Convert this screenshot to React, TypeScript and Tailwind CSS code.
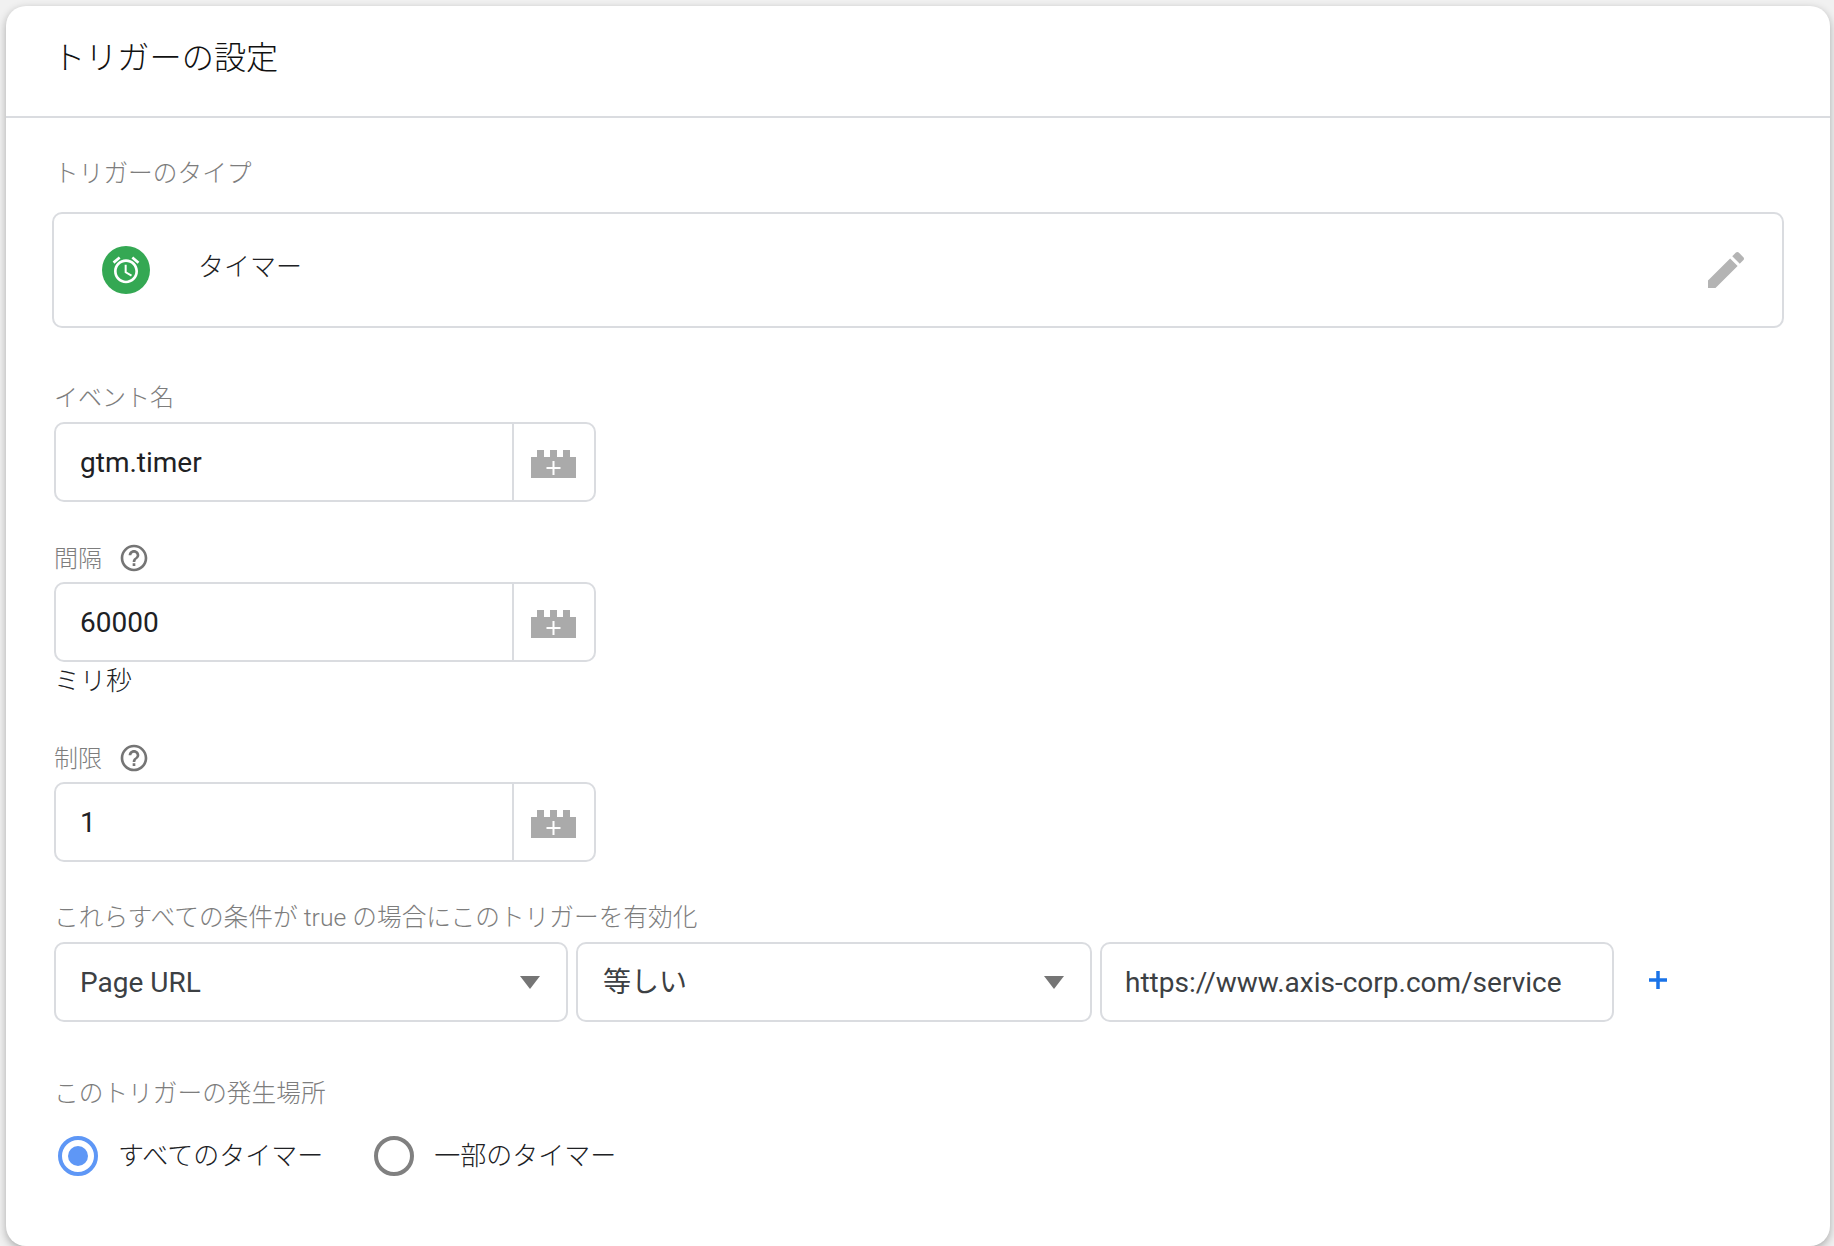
const font = { fontFamily: 'Roboto, "Noto Sans CJK JP", sans-serif' };

function BlockIcon() {
  return (
    <svg width="45" height="28" viewBox="0 0 45 28" className="block">
      <path
        fill="#aaaaaa"
        d="M0 7h6V0h7v7h6V0h7v7h6V0h7v7h6v21H0z"
      />
      <path fill="#ffffff" d="M21.5 11h2v6h6v2h-6v6h-2v-6h-6v-2h6z" />
    </svg>
  );
}

function HelpIcon() {
  return (
    <svg width="32" height="32" viewBox="0 0 24 24" fill="#757575" className="block">
      <path d="M11 18h2v-2h-2v2zm1-16C6.48 2 2 6.48 2 12s4.48 10 10 10 10-4.48 10-10S17.52 2 12 2zm0 18c-4.41 0-8-3.59-8-8s3.59-8 8-8 8 3.59 8 8-3.59 8-8 8zm0-14c-2.21 0-4 1.79-4 4h2c0-1.1.9-2 2-2s2 .9 2 2c0 2-3 1.75-3 5h2c0-2.25 3-2.5 3-5 0-2.21-1.79-4-4-4z" />
    </svg>
  );
}

function Label({ text, help, short, className }: { text: string; help?: boolean; short?: boolean; className?: string }) {
  return (
    <div className={`flex h-8 items-center font-light leading-8 text-[#7d7d7d] ${short ? 'text-[24px]' : 'text-[24.7px]'} ${className}`}>
      <span className={help ? 'pt-[1px]' : 'pt-[2px]'}>{text}</span>
      {help && (
        <span className="ml-4">
          <HelpIcon />
        </span>
      )}
    </div>
  );
}

function VarField({ value, className }: { value: string; className?: string }) {
  return (
    <div className={`flex h-20 w-[542px] rounded-[10px] border-2 border-[#dadce0] ${className}`}>
      <div className="flex flex-1 items-center pl-6 pt-[2px] text-[28px] text-[#202124]">{value}</div>
      <div className="flex w-[82px] items-center justify-center border-l-2 border-[#dadce0] pr-[1px] pt-[3px]">
        <BlockIcon />
      </div>
    </div>
  );
}

function SelectBox({ value, className }: { value: string; className?: string }) {
  return (
    <div className={`flex h-20 items-center justify-between rounded-[10px] border-2 border-[#dadce0] pl-6 pr-[26px] text-[28px] text-[#3c4043] ${className}`}>
      <span className="pt-[2px]">{value}</span>
      <span className="h-0 w-0 border-x-[10px] border-t-[13px] border-x-transparent border-t-[#757575]" />
    </div>
  );
}

function Radio({ text, checked }: { text: string; checked?: boolean }) {
  return (
    <div className="flex items-center gap-5">
      <div className={`flex h-10 w-10 items-center justify-center rounded-full border-[4px] ${checked ? 'border-[#5e97f6]' : 'border-[#808080]'}`}>
        {checked && <div className="h-5 w-5 rounded-full bg-[#5e97f6]" />}
      </div>
      <span className="text-[26px] font-light text-[#202124]">{text}</span>
    </div>
  );
}

export default function App() {
  return (
    <div className="h-[1246px] overflow-hidden bg-[#f1f1f1] pl-[6px] pr-1 pt-[6px]" style={font}>
      <div className="h-[1240px] rounded-[20px] bg-white shadow-[0_3px_8px_rgba(0,0,0,0.3)]">
        <div className="flex h-[112px] items-start border-b-2 border-[#dadce0] pl-[47px] pt-8 text-[32.2px] font-light leading-10 text-[#111111]">
          トリガーの設定
        </div>
        <div className="pl-[48px] pr-[46px]">
          <Label text="トリガーのタイプ" className="mt-[39px]" />
          <div className="ml-[-2px] mt-[23px] flex h-[116px] items-center rounded-[10px] border-2 border-[#dadce0] pl-[48px] pr-[32px]">
            <div className="flex h-12 w-12 items-center justify-center rounded-full bg-[#34a853]">
              <svg width="32" height="32" viewBox="0 0 24 24" fill="#ffffff">
                <path d="M22 5.72l-4.6-3.86-1.29 1.53 4.6 3.86L22 5.72zM7.88 3.39L6.6 1.86 2 5.71l1.29 1.53 4.59-3.85zM12.5 8H11v6l4.75 2.85.75-1.23-4-2.37V8zM12 4c-4.97 0-9 4.03-9 9s4.03 9 9 9 9-4.03 9-9-4.03-9-9-9zm0 16c-3.87 0-7-3.13-7-7s3.13-7 7-7 7 3.13 7 7-3.13 7-7 7z" />
              </svg>
            </div>
            <span className="mb-[6px] ml-[48px] flex-1 text-[26px] font-light text-[#202124]">タイマー</span>
            <svg width="48" height="48" viewBox="0 0 24 24" fill="#b4b4b4">
              <path d="M3 17.25V21h3.75L17.81 9.94l-3.75-3.75L3 17.25zM20.71 7.04c.39-.39.39-1.02 0-1.41l-2.34-2.34c-.39-.39-1.02-.39-1.41 0l-1.83 1.83 3.75 3.75 1.83-1.83z" />
            </svg>
          </div>

          <Label text="イベント名" short className="mt-[53px]" />
          <VarField value="gtm.timer" className="mt-[9px]" />

          <Label text="間隔" help short className="mt-10" />
          <VarField value="60000" className="mt-2" />
          <div className="mt-[3px] h-8 text-[26px] font-light leading-8 text-[#202124]">ミリ秒</div>

          <Label text="制限" help short className="mt-[45px]" />
          <VarField value="1" className="mt-2" />

          <Label text="これらすべての条件が true の場合にこのトリガーを有効化" className="mt-[39px]" />
          <div className="mt-[9px] flex items-start gap-2">
            <SelectBox value="Page URL" className="w-[514px]" />
            <SelectBox value="等しい" className="w-[516px] pl-[25px]" />
            <div className="flex h-20 w-[514px] items-center rounded-[10px] border-2 border-[#dadce0] pl-[23px] pt-[2px] text-[28px] text-[#3c4043]">
              https://www.axis-corp.com/service
            </div>
            <span className="ml-[26px] mt-[28px] text-[#1a73e8]">
              <svg width="20" height="20" viewBox="0 0 20 20" fill="currentColor" className="block">
                <path d="M8.25 1h3.5v7.25H19v3.5h-7.25V19h-3.5v-7.25H1v-3.5h7.25z" />
              </svg>
            </span>
          </div>

          <Label text="このトリガーの発生場所" className="mt-[55px]" />
          <div className="ml-1 mt-[27px] flex gap-[51px]">
            <Radio text="すべてのタイマー" checked />
            <Radio text="一部のタイマー" />
          </div>
        </div>
      </div>
    </div>
  );
}
